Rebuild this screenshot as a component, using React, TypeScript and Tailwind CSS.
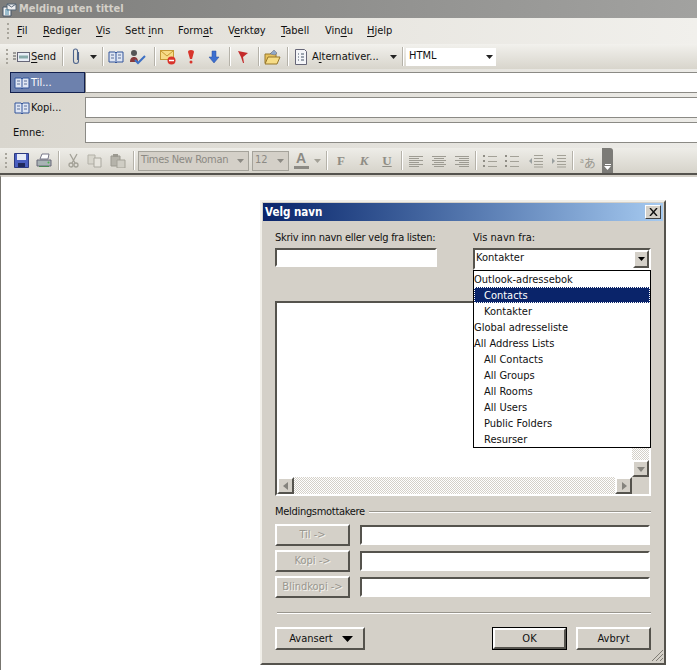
import React from "react";

const Sep = ({ className = "" }: { className?: string }) => (
  <div className={"h-[19px] w-[2px] border-l border-r border-l-[#b5b2a9] border-r-white " + className} />
);

const Grip = () => (
  <div className="flex h-[16px] w-[3px] flex-col justify-between">
    {[0, 1, 2, 3].map((i) => (
      <div key={i} className="h-[2px] w-[2px] bg-[#a8a59c]" />
    ))}
  </div>
);

const Caret = ({ c = "#222" }: { c?: string }) => (
  <svg width="7" height="4" viewBox="0 0 7 4"><path d="M0 0h7L3.500 4z" fill={c} /></svg>
);

const Book = () => (
  <svg width="16" height="14" viewBox="0 0 16 14">
    <path d="M1 2h6l1 1 1-1h6v10H9l-1 1-1-1H1z" fill="#dfe6f3" stroke="#33559a" />
    <path d="M8 3v9" stroke="#33559a" />
    <path d="M3 5h3M3 8h3M10 5h3M10 8h3" stroke="#5b6f99" />
  </svg>
);

const Send = () => (
  <svg width="17" height="12" viewBox="0 0 17 12">
    <path d="M0 2h3M0 5h3M0 8h3" stroke="#555" />
    <rect x="4.500" y="1.500" width="12" height="9" fill="#e8edf6" stroke="#667" />
    <path d="M6 6h9" stroke="#8aa" strokeWidth="3" />
  </svg>
);

const Clip = () => (
  <svg width="10" height="17" viewBox="0 0 10 17" fill="none" stroke="#4d648c" strokeWidth="1.100">
    <path d="M7.500 4v9a2.500 2.500 0 0 1-5 0V3a2 2 0 0 1 4 0v9" />
  </svg>
);

const CheckNames = () => (
  <svg width="18" height="16" viewBox="0 0 18 16">
    <circle cx="5" cy="4" r="3" fill="#555" />
    <path d="M1 13c0-4 2-5 4-5s4 1 4 5z" fill="#8a3a3a" />
    <path d="M6 11l3 3 7-7" fill="none" stroke="#3d70c4" strokeWidth="2" />
  </svg>
);

const MailStop = () => (
  <svg width="16" height="16" viewBox="0 0 16 16">
    <rect x="0.500" y="1.500" width="13" height="9" fill="#f7dc86" stroke="#c59a35" />
    <path d="M1 2l6 5 6-5" fill="none" stroke="#c59a35" />
    <circle cx="11.500" cy="11.500" r="4" fill="#d9342b" />
    <path d="M9 11.500h5" stroke="#fff" strokeWidth="1.500" />
  </svg>
);

const Bang = () => (
  <svg width="8" height="14" viewBox="0 0 8 14">
    <path d="M1 2a3 2 0 0 1 6 0L5 9H3z" fill="#d8352c" />
    <circle cx="4" cy="12" r="1.500" fill="#d8352c" />
  </svg>
);

const Down = () => (
  <svg width="12" height="14" viewBox="0 0 12 14"><path d="M4 1h4v6h3l-5 6-5-6h3z" fill="#3c6fd0" stroke="#2a4f9c" strokeWidth=".5" /></svg>
);

const Flag = () => (
  <svg width="12" height="13" viewBox="0 0 12 13"><path d="M1 1l10 2-5 4 1 6-1 0-2-6z" fill="#c42a2a" /></svg>
);

const Folder = () => (
  <svg width="17" height="16" viewBox="0 0 17 16">
    <path d="M1 5h5l1-1h5v10H1z" fill="#e8c25c" stroke="#96762b" />
    <path d="M1 15l3-7h12l-3 7z" fill="#f6dc86" stroke="#96762b" />
    <path d="M6 5l4-4 3 3-2 2z" fill="#8fa8c9" stroke="#667" strokeWidth=".5" />
  </svg>
);

const Doc = () => (
  <svg width="12" height="16" viewBox="0 0 12 16">
    <path d="M.5.500h9l2 2v13H.5z" fill="#f4f5f8" stroke="#667" />
    <path d="M3 5h1M3 8h1M3 11h1M6 5h3M6 8h3M6 11h3" stroke="#456" />
  </svg>
);

const Save = () => (
  <svg width="15" height="15" viewBox="0 0 15 15">
    <path d="M.5.500h14v14H.5z" fill="#4a5fc0" stroke="#2c3a80" />
    <rect x="3" y="1" width="9" height="6" fill="#e6ebf6" />
    <rect x="4" y="10" width="7" height="4" fill="#20295c" />
  </svg>
);

const Print = () => (
  <svg width="16" height="15" viewBox="0 0 16 15">
    <path d="M4 6l2-5h7l-1 5z" fill="#fff" stroke="#778" />
    <path d="M1 7h14v6H1z" fill="#a9b3b5" stroke="#667" />
    <path d="M3 13h10v1H3z" fill="#4a8a55" />
    <circle cx="12.500" cy="9.500" r="1" fill="#4cb050" />
  </svg>
);

const Cut = () => (
  <svg width="11" height="15" viewBox="0 0 11 15" fill="none" stroke="#a3a197" strokeWidth="1.300">
    <path d="M2 1l5 9M9 1L4 10" />
    <circle cx="3" cy="12" r="2" />
    <circle cx="8" cy="12" r="2" />
  </svg>
);

const Copy = () => (
  <svg width="16" height="14" viewBox="0 0 16 14">
    <path d="M1 1h7v9H1z" fill="#d8d6cd" stroke="#b3b1a8" />
    <path d="M7 4h7v9H7z" fill="#e6e4dd" stroke="#aaa89f" />
  </svg>
);

const Paste = () => (
  <svg width="16" height="14" viewBox="0 0 16 14">
    <path d="M1 2h9v10H1z" fill="#b5b3aa" stroke="#9b9990" />
    <path d="M3 0h5v3H3z" fill="#9b9990" />
    <path d="M7 6h8v8H7z" fill="#cfcdc4" stroke="#a3a197" />
  </svg>
);

const Lines = ({ pad }: { pad: "l" | "c" | "r" }) => {
  const ys = [1, 3, 5, 7, 9, 11];
  return (
    <svg width="14" height="12" viewBox="0 0 14 12" stroke="#9d9b92">
      {ys.map((y, i) => {
        const short = i % 2 === 1;
        const x1 = short ? (pad === "l" ? 0 : pad === "c" ? 2 : 4) : 0;
        const x2 = short ? (pad === "l" ? 10 : pad === "c" ? 12 : 14) : 14;
        return <path key={y} d={`M${x1} ${y + 0.5}H${x2}`} />;
      })}
    </svg>
  );
};

const ListIcon = ({ kind }: { kind: "num" | "bul" | "out" | "in" }) => (
  <svg width="15" height="14" viewBox="0 0 15 14" stroke="#a3a197">
    {kind === "num" || kind === "bul" ? (
      <>
        <path d="M1 1v2M1 6v2M1 11v2" stroke="#8f8d85" strokeWidth="2" />
        <path d="M5 2.500h9M5 7.500h9M5 12.500h9" />
      </>
    ) : (
      <>
        <path d="M6 1.500h9M6 4.500h9M6 7.500h9M6 10.500h9M6 13h9" />
        <path d={kind === "out" ? "M4 4L1 7l3 3z" : "M1 4l3 3-3 3z"} fill="#9aa0a0" stroke="none" />
      </>
    )}
  </svg>
);

const Phon = () => (
  <div className="flex h-[17px] w-[18px] items-end text-[#9a9890]">
    <span className="mb-[4px] text-[7px] leading-[8px]">a</span>
    <span className="text-[12px] leading-[13px]" style={{ fontFamily: '"Noto Sans CJK JP", sans-serif' }}>あ</span>
  </div>
);

const MenuItem = ({ pre = "", u, post = "", w }: { pre?: string; u: string; post?: string; w: string }) => (
  <span className={"whitespace-nowrap " + w}>
    {pre}
    <span className="underline underline-offset-2">{u}</span>
    {post}
  </span>
);

const AddrBtn = ({ label, active }: { label: string; active?: boolean }) => (
  <div
    className={
      "flex h-[21px] w-[75px] items-center gap-[1px] border pl-[3px] " +
      (active ? "border-[#12204e] bg-[#6d81ad] text-white" : "border-transparent text-[#111]")
    }
  >
    <Book />
    <span className="pt-[1px]">{label}</span>
  </div>
);

const HeadInput = () => (
  <div className="h-[21px] flex-1 border-y border-l border-[#8b8a85] bg-white" />
);

const Sunken = ({ className = "" }: { className?: string }) => (
  <div className={"border-2 border-b-white border-l-[#55534d] border-r-white border-t-[#55534d] bg-white " + className} />
);

const W95Btn = ({ children, className = "", disabled }: { children: React.ReactNode; className?: string; disabled?: boolean }) => (
  <div
    className={
      "flex items-center justify-center border-2 border-b-[#55534d] border-l-white border-r-[#55534d] border-t-white bg-[#d4d0c8] " +
      (disabled ? "text-[#99978f] [text-shadow:1px_1px_0_#f4f3ef] " : "text-[#111] ") +
      className
    }
  >
    {children}
  </div>
);

const ScrollBtn = ({ d }: { d: string }) => (
  <div className="flex h-[17px] w-[17px] items-center justify-center border-2 border-b-[#55534d] border-l-white border-r-[#55534d] border-t-white bg-[#d4d0c8]">
    <svg width="8" height="8" viewBox="0 0 8 8"><path d={d} fill="#85837d" /></svg>
  </div>
);

const checker = {
  backgroundImage: "repeating-conic-gradient(#d4d0c8 0% 25%, #ffffff 0% 50%)",
  backgroundSize: "2px 2px",
};

const entries: [string, number][] = [
  ["Outlook-adressebok", 0],
  ["Contacts", 1],
  ["Kontakter", 1],
  ["Global adresseliste", 0],
  ["All Address Lists", 0],
  ["All Contacts", 1],
  ["All Groups", 1],
  ["All Rooms", 1],
  ["All Users", 1],
  ["Public Folders", 1],
  ["Resurser", 1],
];

export default function App() {
  return (
    <div
      className="relative flex h-[670px] w-[697px] flex-col overflow-hidden bg-white text-[11px] font-stretch-condensed text-[#111]"
      style={{ fontFamily: '"DejaVu Sans Condensed", "DejaVu Sans", sans-serif' }}
    >
      {/* title bar */}
      <div className="flex h-[18px] items-center gap-[2px] bg-gradient-to-r from-[#7e7e7c] to-[#a2a2a0] pl-[2px]">
        <svg width="15" height="15" viewBox="0 0 15 15">
          <path d="M1 5h8v9H1z" fill="#f2f2f2" stroke="#456" />
          <path d="M5 2h9v6H5z" fill="#eee" stroke="#567" />
          <path d="M5 2l4.500 3L14 2" fill="none" stroke="#567" />
          <path d="M3 8h4M3 10h4M3 12h4" stroke="#48a" />
        </svg>
        <span className="text-[11px] font-bold text-[#d4d0c8]">Melding uten tittel</span>
      </div>

      {/* menu bar */}
      <div className="flex h-[26px] items-center bg-gradient-to-r from-[#dfdcd5] to-[#f1f0ec] pl-[7px]">
        <Grip />
        <div className="ml-[7px] flex items-center pt-[1px]">
          <MenuItem u="F" post="il" w="w-[26px]" />
          <MenuItem u="R" post="ediger" w="w-[53px]" />
          <MenuItem u="V" post="is" w="w-[29px]" />
          <MenuItem pre="Sett " u="i" post="nn" w="w-[53px]" />
          <MenuItem pre="Form" u="a" post="t" w="w-[50px]" />
          <MenuItem pre="V" u="e" post="rktøy" w="w-[53px]" />
          <MenuItem u="T" post="abell" w="w-[44px]" />
          <MenuItem pre="Vin" u="d" post="u" w="w-[42px]" />
          <MenuItem u="H" post="jelp" w="w-[40px]" />
        </div>
      </div>

      {/* standard toolbar */}
      <div className="flex h-[25px] items-center bg-gradient-to-b from-[#f2f1ed] to-[#d8d5cc] pl-[6px]">
        <Grip />
        <div className="ml-[4px]"><Send /></div>
        <span className="ml-[1px] w-[31px] pt-[1px]"><span className="underline underline-offset-2">S</span>end</span>
        <Sep />
        <div className="ml-[7px]"><Clip /></div>
        <div className="ml-[9px]"><Caret /></div>
        <Sep className="ml-[5px]" />
        <div className="ml-[4px]"><Book /></div>
        <div className="ml-[5px]"><CheckNames /></div>
        <Sep className="ml-[7px]" />
        <div className="ml-[4px]"><MailStop /></div>
        <div className="ml-[11px]"><Bang /></div>
        <div className="ml-[13px]"><Down /></div>
        <Sep className="ml-[9px]" />
        <div className="ml-[6px]"><Flag /></div>
        <Sep className="ml-[9px]" />
        <div className="ml-[4px]"><Folder /></div>
        <Sep className="ml-[6px]" />
        <div className="ml-[6px]"><Doc /></div>
        <span className="ml-[5px] w-[78px] whitespace-nowrap pt-[1px]">A<span className="underline underline-offset-2">l</span>ternativer...</span>
        <Caret />
        <Sep className="ml-[5px]" />
        <div className="ml-[2px] flex h-[18px] w-[90px] items-center justify-between bg-white pl-[3px] pr-[3px]">
          <span>HTML</span>
          <Caret />
        </div>
      </div>

      {/* address fields */}
      <div className="flex h-[79px] flex-col gap-[4px] bg-gradient-to-r from-[#d9d6ce] to-[#ecebe7] pl-[10px] pt-[3px]">
        <div className="flex items-center">
          <AddrBtn label="Til..." active />
          <HeadInput />
        </div>
        <div className="flex items-center">
          <AddrBtn label="Kopi..." />
          <HeadInput />
        </div>
        <div className="flex items-center">
          <div className="flex h-[21px] w-[75px] items-center pl-[3px] pt-[2px]">Emne:</div>
          <HeadInput />
        </div>
      </div>

      {/* format toolbar */}
      <div className="flex h-[27px] items-center border-b-2 border-[#55534e] bg-gradient-to-b from-[#eeede8] to-[#d6d3ca] pl-[5px]">
        <Grip />
        <div className="ml-[6px]"><Save /></div>
        <div className="ml-[7px]"><Print /></div>
        <Sep className="ml-[6px]" />
        <div className="ml-[8px]"><Cut /></div>
        <div className="ml-[8px]"><Copy /></div>
        <div className="ml-[7px]"><Paste /></div>
        <Sep className="ml-[7px]" />
        <div className="ml-[3px] flex h-[20px] w-[111px] items-center justify-between border border-[#a5a39b] bg-[#d4d0c8] pl-[2px] pr-[4px] text-[#8c8a84]">
          <span className="whitespace-nowrap tracking-[-0.3px]">Times New Roman</span>
          <Caret c="#8c8a84" />
        </div>
        <div className="ml-[3px] flex h-[20px] w-[37px] items-center justify-between border border-[#a5a39b] bg-[#d4d0c8] pl-[2px] pr-[4px] text-[#8c8a84]">
          <span>12</span>
          <Caret c="#8c8a84" />
        </div>
        <div className="ml-[4px] flex w-[16px] flex-col items-center">
          <span className="text-[14px] font-bold leading-[13px] text-[#8c8a84]" style={{ fontFamily: '"Liberation Sans", sans-serif' }}>A</span>
          <div className="mt-[1px] h-[3px] w-[15px] bg-[#8c8a84]" />
        </div>
        <div className="ml-[5px]"><Caret c="#a3a197" /></div>
        <Sep className="ml-[5px]" />
        <span className="ml-[6px] w-[14px] text-center text-[13px] font-bold text-[#8f8d85]" style={{ fontFamily: '"Liberation Serif", serif' }}>F</span>
        <span className="ml-[9px] w-[14px] text-center text-[13px] font-bold italic text-[#8f8d85]" style={{ fontFamily: '"Liberation Serif", serif' }}>K</span>
        <span className="ml-[9px] w-[14px] text-center text-[13px] font-bold text-[#8f8d85] underline" style={{ fontFamily: '"Liberation Serif", serif' }}>U</span>
        <Sep className="ml-[7px]" />
        <div className="ml-[6px]"><Lines pad="l" /></div>
        <div className="ml-[9px]"><Lines pad="c" /></div>
        <div className="ml-[9px]"><Lines pad="r" /></div>
        <Sep className="ml-[6px]" />
        <div className="ml-[6px]"><ListIcon kind="num" /></div>
        <div className="ml-[7px]"><ListIcon kind="bul" /></div>
        <div className="ml-[8px]"><ListIcon kind="out" /></div>
        <div className="ml-[8px]"><ListIcon kind="in" /></div>
        <Sep className="ml-[6px]" />
        <div className="ml-[6px]"><Phon /></div>
        <div className="ml-[4px] flex h-[25px] w-[11px] flex-col items-center justify-end rounded-tr-[3px] bg-[#7c7b77] pb-[3px]">
          <div className="mb-[1px] h-px w-[6px] bg-white" />
          <Caret c="#fff" />
        </div>
      </div>

      {/* document */}
      <div className="relative flex-1 border-l border-t-2 border-[#d4d0c8] border-l-[#77756f] bg-white">
        {/* dialog window */}
        <div className="absolute left-[259px] top-[23px] flex h-[465px] w-[406px] flex-col border-2 border-b-[#55534d] border-l-[#f1efe9] border-r-[#55534d] border-t-[#f1efe9] bg-[#d4d0c8] p-[1px]">
          <div className="flex h-[18px] items-center justify-between bg-gradient-to-r from-[#0a246a] to-[#a6caf0] pl-[2px] pr-[2px]">
            <span className="pt-[2px] text-[11.500px] font-bold text-white">Velg navn</span>
            <div className="flex h-[14px] w-[16px] items-center justify-center border border-b-[#404040] border-l-white border-r-[#404040] border-t-white bg-[#d4d0c8]">
              <svg width="9" height="8" viewBox="0 0 9 8"><path d="M1 0l7 8M8 0L1 8" stroke="#111" strokeWidth="1.400" /></svg>
            </div>
          </div>

          <div className="relative flex flex-1 flex-col px-[12px]">
            <div className="mt-[9px] flex">
              <div className="w-[198px]">
                <div className="h-[16px] whitespace-nowrap leading-[16px] tracking-[-0.26px]">Skriv inn navn eller velg fra listen:</div>
                <Sunken className="mt-[2px] h-[19px] w-[162px]" />
              </div>
              <div className="flex-1">
                <div className="h-[16px] leading-[16px]">Vis navn fra:</div>
                <div className="mt-[2px] flex h-[22px] items-start justify-between border-2 border-b-white border-l-[#55534d] border-r-white border-t-[#55534d] bg-white pl-[1px]">
                  <span className="leading-[16px]">Kontakter</span>
                  <div className="flex h-[18px] w-[16px] items-center justify-center border-2 border-b-[#55534d] border-l-white border-r-[#55534d] border-t-white bg-[#d4d0c8]">
                    <Caret c="#000" />
                  </div>
                </div>
              </div>
            </div>

            {/* results list */}
            <div className="relative mt-[31px] h-[195px] border-2 border-b-white border-l-[#55534d] border-r-white border-t-[#55534d] bg-white">
              <div className="absolute bottom-0 left-0 right-0 flex">
                <ScrollBtn d="M6 0v8L1 4z" />
                <div className="h-[17px] flex-1" style={checker} />
                <ScrollBtn d="M2 0v8l5-4z" />
                <div className="h-[17px] w-[17px] bg-[#d4d0c8]" />
              </div>
              <div className="absolute bottom-[17px] right-0 flex h-[30px] w-[17px] flex-col justify-end" style={checker}>
                <ScrollBtn d="M0 2h8L4 7z" />
              </div>
            </div>

            <div className="mt-[8px] flex h-[16px] items-center gap-[4px]">
              <span className="leading-[16px] tracking-[-0.3px]">Meldingsmottakere</span>
              <div className="h-[2px] flex-1 border-b border-t border-b-white border-t-[#98958d]" />
            </div>

            {["Til ->", "Kopi ->", "Blindkopi ->"].map((t) => (
              <div key={t} className="mt-[4px] flex h-[22px] items-start gap-[10px]">
                <W95Btn disabled className="h-[22px] w-[75px] flex-none whitespace-nowrap">{t}</W95Btn>
                <Sunken className="mr-[1px] mt-[1px] h-[20px] flex-1" />
              </div>
            ))}

            <div className="ml-[2px] mt-[14px] h-[2px] border-b border-t border-b-white border-t-[#98958d]" />

            <div className="mt-[13px] flex items-center pt-0">
              <W95Btn className="h-[23px] w-[90px] gap-[9px] pl-[2px]">
                <span className="pt-[1px]">Avansert</span>
                <svg width="11" height="6" viewBox="0 0 11 6"><path d="M0 0h11L5.500 6z" fill="#000" /></svg>
              </W95Btn>
              <div className="ml-[127px] flex h-[23px] w-[75px] border border-black">
                <W95Btn className="flex-1"><span className="pt-[1px]">OK</span></W95Btn>
              </div>
              <W95Btn className="ml-[9px] h-[23px] w-[75px]"><span className="pt-[1px]">Avbryt</span></W95Btn>
            </div>

            {/* dropdown */}
            <div className="absolute left-[210px] top-[49px] w-[178px] border border-black bg-white">
              {entries.map(([t, ind], i) => (
                <div
                  key={t}
                  className={
                    "h-[16px] whitespace-nowrap pt-[1px] leading-[16px] " +
                    (ind ? "pl-[10px] " : "pl-[0px] ") +
                    (i === 1 ? "bg-[#0a246a] text-white outline-1 -outline-offset-1 outline-dotted outline-white" : "")
                  }
                >
                  {t}
                </div>
              ))}
            </div>

            {/* grip */}
            <svg className="absolute bottom-0 right-[-1px]" width="13" height="13" viewBox="0 0 13 13" stroke="#807d75">
              <path d="M12 1L1 12M12 5L5 12M12 9L9 12" />
            </svg>
          </div>
        </div>
      </div>
    </div>
  );
}
